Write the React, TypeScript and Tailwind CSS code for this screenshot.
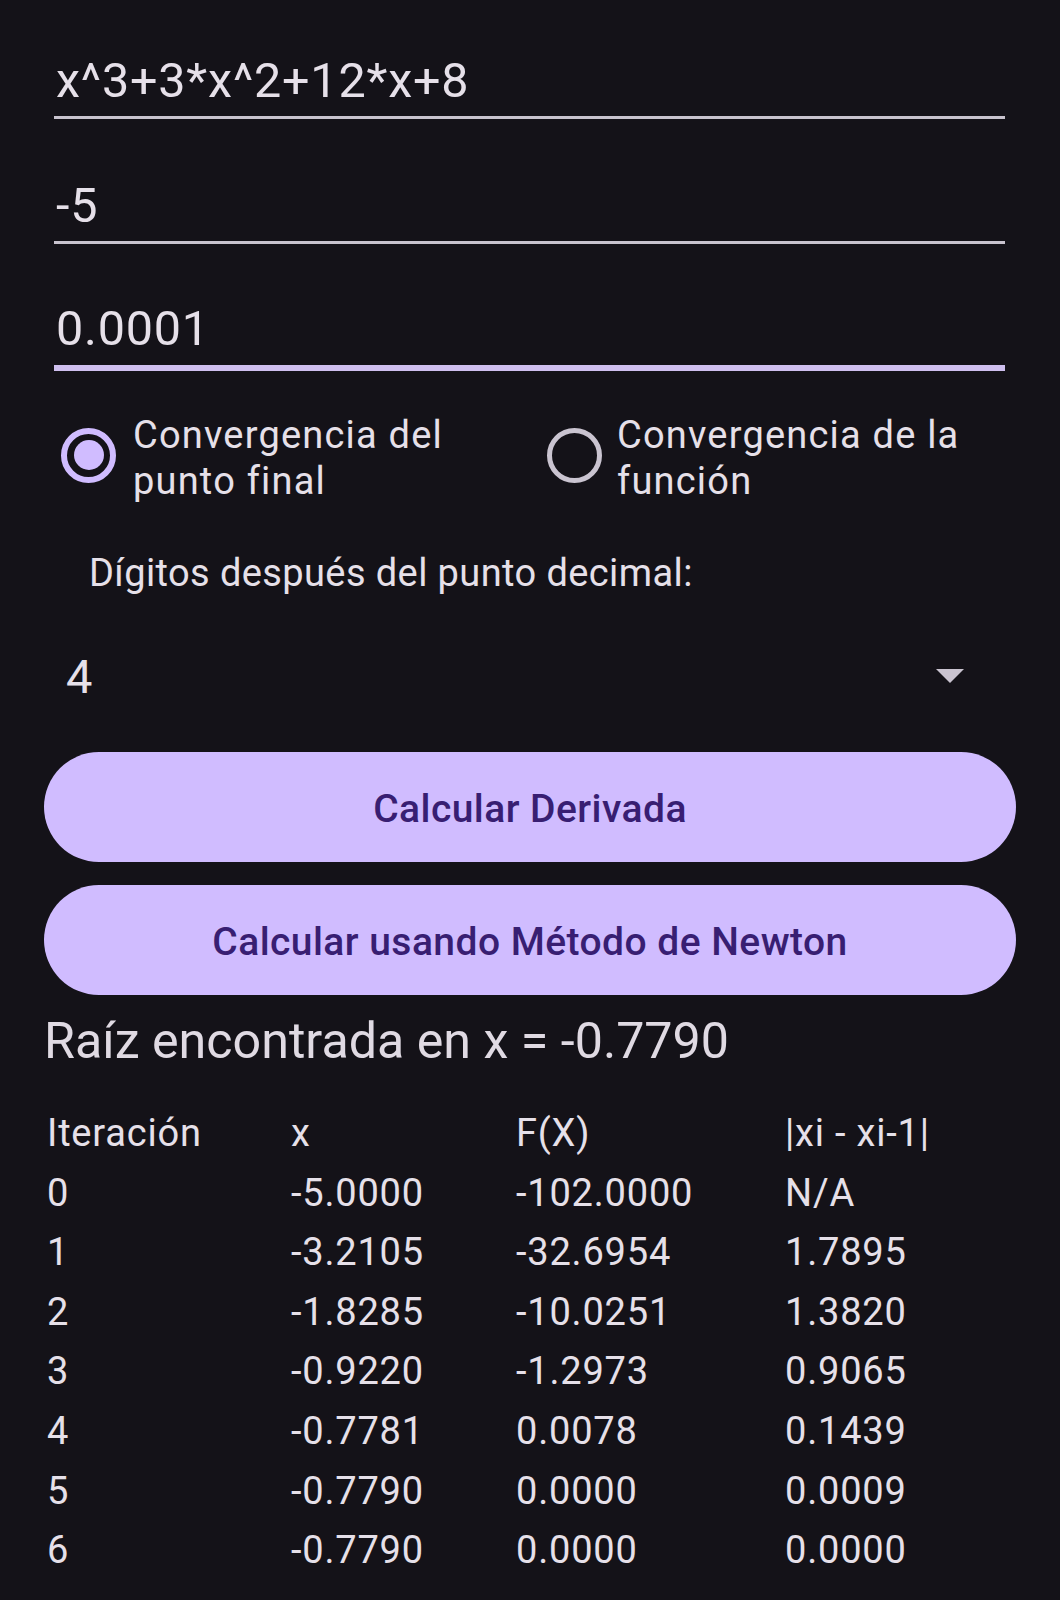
import React from "react";

function Field({ value, focused, className }: { value: string; focused?: boolean; className?: string }) {
  return (
    <div className={className}>
      <div className="h-[56px] pl-[2px] text-[48.5px] leading-[56px] tracking-[0.8px] whitespace-nowrap">{value}</div>
      {focused ? (
        <div className="mt-[8px] h-[6px] bg-[#CFBFEF]" />
      ) : (
        <div className="mt-[7px] h-[3px] bg-[#C8C3CE]" />
      )}
    </div>
  );
}

function Radio({ selected }: { selected?: boolean }) {
  if (selected) {
    return (
      <div className="w-[55px] h-[55px] shrink-0 rounded-full border-[6px] border-[#D0BCFF] flex items-center justify-center">
        <div className="w-[30px] h-[30px] rounded-full bg-[#D0BCFF]" />
      </div>
    );
  }
  return <div className="w-[55px] h-[55px] shrink-0 rounded-full border-[5px] border-[#CAC4D0]" />;
}

const rows = [
  ["0", "-5.0000", "-102.0000", "N/A"],
  ["1", "-3.2105", "-32.6954", "1.7895"],
  ["2", "-1.8285", "-10.0251", "1.3820"],
  ["3", "-0.9220", "-1.2973", "0.9065"],
  ["4", "-0.7781", "0.0078", "0.1439"],
  ["5", "-0.7790", "0.0000", "0.0009"],
  ["6", "-0.7790", "0.0000", "0.0000"],
];

function Row({ cells }: { cells: string[] }) {
  return (
    <div className="flex h-[59.6px] leading-[59.6px] text-[38px] tracking-[0.8px] whitespace-nowrap">
      <div className="w-[244px]">{cells[0]}</div>
      <div className="w-[225px]">{cells[1]}</div>
      <div className="w-[269px]">{cells[2]}</div>
      <div>{cells[3]}</div>
    </div>
  );
}

export default function App() {
  return (
    <div className="w-[1060px] min-h-[1600px] bg-[#141218] text-[#E6E0E9] font-['Roboto','Noto_Sans',sans-serif] overflow-hidden">
      <div className="pt-[53px] pl-[54px] pr-[55px]">
        <Field value="x^3+3*x^2+12*x+8" />
        <Field value="-5" className="mt-[59px]" />
        <Field value="0.0001" focused className="mt-[57px]" />
      </div>

      <div className="mt-[40px] pl-[27px] flex h-[94px]">
        <div className="w-[486px] flex items-center">
          <div className="ml-[34px] mt-[-6px]">
            <Radio selected />
          </div>
          <div className="ml-[17px] w-[370px] text-[38px] leading-[46px] tracking-[1.2px]">
            Convergencia del punto final
          </div>
        </div>
        <div className="flex items-center">
          <div className="ml-[34px] mt-[-6px]">
            <Radio />
          </div>
          <div className="ml-[15px] w-[380px] text-[38px] leading-[46px] tracking-[1.2px]">
            Convergencia de la función
          </div>
        </div>
      </div>

      <div className="mt-[45px] pl-[89px] text-[38px] leading-[47px] tracking-[0.4px] whitespace-nowrap">
        Dígitos después del punto decimal:
      </div>

      <div className="mt-[52px] pl-[66px] pr-[96px] flex items-center justify-between h-[56px]">
        <div className="text-[47px] leading-[56px] tracking-[0.5px]">4</div>
        <svg width="28" height="14" viewBox="0 0 28 14" className="mt-[-2px]">
          <polygon points="0,0 28,0 14,14" fill="#CAC4D0" />
        </svg>
      </div>

      <div className="mt-[47px] pl-[44px] flex flex-col gap-[23px]">
        <button className="w-[972px] h-[110px] pt-[5px] rounded-full bg-[#D0BCFF] text-[#381E72] text-[39px] font-medium tracking-[0.45px]">
          Calcular Derivada
        </button>
        <button className="w-[972px] h-[110px] pt-[5px] rounded-full bg-[#D0BCFF] text-[#381E72] text-[39px] font-medium tracking-[0.45px]">
          Calcular usando Método de Newton
        </button>
      </div>

      <div className="mt-[17px] pl-[44px] text-[50.2px] leading-[58px] whitespace-nowrap text-[#E0DAE3]">
        Raíz encontrada en x = -0.7790
      </div>

      <div className="mt-[34px] pl-[47px]">
        <Row cells={["Iteración", "x", "F(X)", "|xi - xi-1|"]} />
        {rows.map((r, i) => (
          <Row key={i} cells={r} />
        ))}
      </div>
    </div>
  );
}
